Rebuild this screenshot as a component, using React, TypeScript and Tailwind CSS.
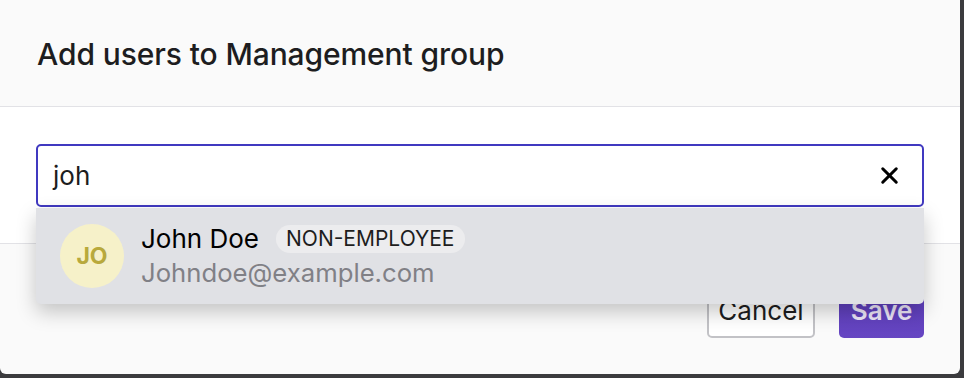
import { X } from "lucide-react";

export default function App() {
  return (
    <div
      className="h-[378px] w-[964px] bg-[#3b3b3e]"
      style={{ fontFamily: "Inter, 'Noto Sans', sans-serif" }}
    >
      <div className="flex h-[374px] w-[960px] flex-col overflow-visible rounded-b-[6px] bg-[#fafafa]">
        {/* Header */}
        <div className="flex h-[107px] items-center border-b border-[#e2e2e6] px-[37px] pt-[2px]">
          <h2 className="text-[30px] font-medium tracking-[-0.1px] text-[#1d1d20]">
            Add users to Management group
          </h2>
        </div>

        {/* Body */}
        <div className="relative z-10 bg-white px-[36px] pb-[36px] pt-[37px]">
          <div className="relative">
            <div className="flex h-[63px] items-center rounded-[5px] border-2 border-[#4039c0] bg-white pl-[15px] pr-[19px]">
              <span className="flex-1 text-[26px] text-[#1d1d20]">joh</span>
              <X className="h-[27px] w-[27px] text-black" strokeWidth={2.7} />
            </div>

            {/* Dropdown */}
            <div className="absolute left-0 right-0 top-[64px] flex h-[96px] items-center gap-[17px] rounded-b-[5px] bg-[#e0e1e5] px-[24px] shadow-[0_8px_20px_rgba(0,0,0,0.22)]">
              <div className="flex h-[64px] w-[64px] items-center justify-center rounded-full bg-[#f6f1c9] text-[23px] font-bold text-[#b8a93c]">
                JO
              </div>
              <div className="flex flex-col leading-[34px]">
                <div className="flex items-center gap-[17px]">
                  <span className="text-[26px] text-black">John Doe</span>
                  <span className="rounded-full bg-[#ececee] px-[10px] text-[21px] leading-[28px] text-[#1d1d20]">
                    NON-EMPLOYEE
                  </span>
                </div>
                <span className="text-[25.7px] text-[#808086]">Johndoe@example.com</span>
              </div>
            </div>
          </div>
        </div>

        {/* Footer */}
        <div className="flex flex-1 items-start justify-end gap-[24px] border-t border-[#e2e2e6] px-[36px] pt-[39px]">
          <button className="h-[55px] w-[108px] rounded-[5px] border-2 border-[#c2c2c6] bg-white text-[26px] text-[#1d1d20]">
            Cancel
          </button>
          <button className="h-[55px] w-[85px] rounded-[5px] bg-gradient-to-b from-[#5b3bb9] to-[#6646c2] text-[26px] font-semibold text-[#ece6f8]">
            Save
          </button>
        </div>
      </div>
    </div>
  );
}
